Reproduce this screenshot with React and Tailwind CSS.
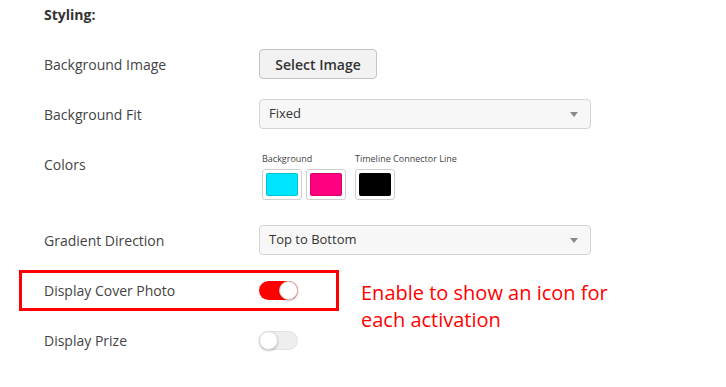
const font = { fontFamily: '"Open Sans", "Noto Sans", sans-serif' };

function Select({ value }) {
  return (
    <div className="flex h-[30px] w-[332px] items-center justify-between rounded-[4px] border border-[#d4d4d4] bg-[#f7f7f7] pl-[9px] pr-[12px] text-[13px] text-[#333]">
      <span>{value}</span>
      <span className="h-0 w-0 border-x-[4px] border-t-[5px] border-x-transparent border-t-[#8a8a8a]" />
    </div>
  );
}

function Swatch({ color }) {
  return (
    <div className="flex h-[31px] w-[40px] items-center justify-center rounded-[3px] border border-[#cfcfcf] bg-white">
      <div className="h-[23px] w-[32px] rounded-[2px] border border-black/15" style={{ background: color }} />
    </div>
  );
}

function Toggle({ on }) {
  return on ? (
    <div className="flex h-[19px] w-[39px] items-center justify-end rounded-full bg-[#ff0000]">
      <div className="h-[19px] w-[19px] rounded-full border border-[#e6c6c6] bg-white shadow-[0_1px_2px_rgba(0,0,0,0.25)]" />
    </div>
  ) : (
    <div className="flex h-[19px] w-[39px] items-center justify-start rounded-full border border-[#e2e2e2] bg-[#eeeeee]">
      <div className="-ml-px h-[19px] w-[19px] rounded-full border border-[#dcdcdc] bg-white shadow-[0_1px_2px_rgba(0,0,0,0.25)]" />
    </div>
  );
}

function Row({ label, children, className = '' }) {
  return (
    <div className={`flex items-center pl-[44px] ${className}`}>
      <div className="w-[215px] text-[14px] text-[#444]">{label}</div>
      {children}
    </div>
  );
}

export default function App() {
  return (
    <div className="h-[387px] w-[726px] bg-white pt-[5px]" style={font}>
      <div className="h-[20px] pl-[44px] text-[14px] font-bold leading-[20px] text-[#333]">Styling:</div>

      <Row label="Background Image" className="mt-[24px] h-[30px]">
        <button className="h-[30px] w-[118px] rounded-[4px] border border-[#c4c4c4] bg-[#f2f2f2] text-[14px] font-semibold text-[#333]">
          Select Image
        </button>
      </Row>

      <Row label="Background Fit" className="mt-[20px] h-[30px]">
        <Select value="Fixed" />
      </Row>

      <div className="mt-[20px] flex h-[50px] items-start pl-[44px]">
        <div className="w-[218px] pt-[6px] text-[14px] leading-[20px] text-[#444]">Colors</div>
        <div className="flex gap-[9px] pt-[4px]">
          <div>
            <div className="text-[9px] leading-[12px] text-[#444]">Background</div>
            <div className="mt-[4px] flex gap-[4px]">
              <Swatch color="#00e5ff" />
              <Swatch color="#ff0080" />
            </div>
          </div>
          <div>
            <div className="text-[9px] leading-[12px] text-[#444]">Timeline Connector Line</div>
            <div className="mt-[4px] flex">
              <Swatch color="#000000" />
            </div>
          </div>
        </div>
      </div>

      <Row label="Gradient Direction" className="mt-[26px] h-[30px]">
        <Select value="Top to Bottom" />
      </Row>

      <div className="mt-[15px] flex h-[41px] items-start">
        <div className="ml-[19px] flex h-[41px] w-[320px] items-center border-[3px] border-[#ff0000] pl-[22px]">
          <div className="w-[215px] text-[14px] text-[#444]">Display Cover Photo</div>
          <Toggle on />
        </div>
        <div className="ml-[22px] mt-[9px] text-[20px] leading-[27px] text-[#ff0000]">
          Enable to show an icon for
          <br />
          each activation
        </div>
      </div>

      <Row label="Display Prize" className="mt-[14px] h-[30px]">
        <Toggle />
      </Row>
    </div>
  );
}
